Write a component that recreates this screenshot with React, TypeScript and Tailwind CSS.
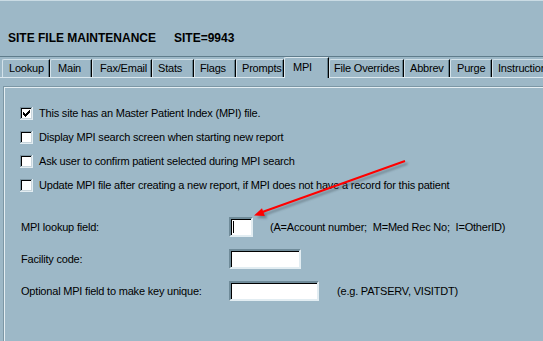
import React from 'react'

const tabs = [
  { label: 'Lookup', cls: 'w-[48px] pl-[6px]' },
  { label: 'Main', cls: 'w-[42px] pl-[7px]' },
  { label: 'Fax/Email', cls: 'w-[60px] pl-[7px]' },
  { label: 'Stats', cls: 'w-[42px] pl-[5px]' },
  { label: 'Flags', cls: 'w-[42px] pl-[5px]' },
  { label: 'Prompts', cls: 'w-[48px] pl-[5px]' },
  { label: 'MPI', cls: 'w-[45px] pl-[8px]', active: true },
  { label: 'File Overrides', cls: 'w-[75px] pl-[4px]' },
  { label: 'Abbrev', cls: 'w-[46px] pl-[5px]' },
  { label: 'Purge', cls: 'w-[42px] pl-[6px]' },
  { label: 'Instructions', cls: 'w-[70px] pl-[5px]' },
]

const options = [
  { text: 'This site has an Master Patient Index (MPI) file.', checked: true },
  { text: 'Display MPI search screen when starting new report' },
  { text: 'Ask user to confirm patient selected during MPI search' },
  { text: 'Update MPI file after creating a new report, if MPI does not have a record for this patient' },
]

// classic 7x7 check glyph
const checkPx = [
  '......X',
  '.....XX',
  'X...XXX',
  'XX.XXX.',
  'XXXXX..',
  '.XXX...',
  '..X....',
]

function CheckBox({ checked = false }: { checked?: boolean }) {
  return (
    <svg width="13" height="13" viewBox="0 0 13 13" shapeRendering="crispEdges" className="shrink-0">
      <rect x="0" y="0" width="13" height="13" fill="#e3edf2" />
      <rect x="0" y="0" width="12" height="1" fill="#7b94a2" />
      <rect x="0" y="0" width="1" height="12" fill="#7b94a2" />
      <rect x="1" y="1" width="11" height="11" fill="#c8d5dc" />
      <rect x="1" y="1" width="10" height="1" fill="#000" />
      <rect x="1" y="1" width="1" height="10" fill="#000" />
      <rect x="2" y="2" width="9" height="9" fill="#fff" />
      {checked &&
        checkPx.map((row, y) =>
          row.split('').map((c, x) =>
            c === 'X' ? <rect key={`${x}-${y}`} x={3 + x} y={3 + y} width="1" height="1" fill="#000" /> : null
          )
        )}
    </svg>
  )
}

function Field({ w, children }: { w: string; children?: React.ReactNode }) {
  return (
    <div
      className={`h-[20px] ${w} bg-white border-2 border-t-[#6f8b99] border-l-[#6f8b99] border-b-[#e2edf2] border-r-[#e2edf2] shadow-[inset_1px_1px_0_#000] flex items-center pl-[2px]`}
    >
      {children}
    </div>
  )
}

export default function App() {
  return (
    <div
      className="relative w-[543px] h-[341px] overflow-hidden bg-[#9db8c7] text-black text-[11px] tracking-[-0.2px]"
      style={{ fontFamily: '"Liberation Sans", Arial, sans-serif' }}
    >
      {/* title */}
      <div className="h-[56px] border-t border-[#cadbe4] pt-[30px] pl-[8px] flex font-bold text-[12px] tracking-normal leading-[14px]">
        <span>SITE FILE MAINTENANCE</span>
        <span className="ml-[18px]">SITE=9943</span>
      </div>
      <div className="h-px bg-[#5f7c8b]" />

      {/* tabs */}
      <div className="h-[21px] flex items-end pl-[2px] border-b border-[#dbe8ef] whitespace-nowrap">
        {tabs.map((t) =>
          t.active ? (
            <div
              key={t.label}
              className={`${t.cls} relative -mb-px h-[21px] bg-[#9db8c7] border-t border-l border-[#dbe8ef] border-r border-r-black shadow-[inset_-1px_0_0_#637f8d] rounded-tl-[2px] pt-[3px] leading-[13px] shrink-0`}
            >
              {t.label}
            </div>
          ) : (
            <div
              key={t.label}
              className={`${t.cls} h-[18px] border-t border-l border-[#d3e2ea] border-r border-r-black shadow-[inset_-1px_0_0_#637f8d] rounded-tl-[2px] pt-[2px] leading-[13px] shrink-0 overflow-hidden`}
            >
              {t.label}
            </div>
          )
        )}
      </div>

      {/* page */}
      <div className="pt-[8px] pl-[3px]">
        <div className="h-[260px] border-t border-l border-[#7c97a5] shadow-[inset_1px_1px_0_#e4eef3] pt-[14px]">
          <div className="flex flex-col pl-[16px]">
            {options.map((o) => (
              <div key={o.text} className="h-[24px] flex items-center gap-[6px]">
                <CheckBox checked={o.checked} />
                <span className="leading-[13px]">{o.text}</span>
              </div>
            ))}
          </div>

          <div className="mt-[20px] flex flex-col gap-[12px] pl-[17px]">
            <div className="flex items-center">
              <span className="w-[208px]">MPI lookup field:</span>
              <Field w="w-[24px]">
                <span className="w-px h-[12px] bg-black" />
              </Field>
              <span className="ml-[17px]">(A=Account number;&nbsp; M=Med Rec No;&nbsp; I=OtherID)</span>
            </div>
            <div className="flex items-center">
              <span className="w-[208px]">Facility code:</span>
              <Field w="w-[72px]" />
            </div>
            <div className="flex items-center">
              <span className="w-[208px]">Optional MPI field to make key unique:</span>
              <Field w="w-[90px]" />
              <span className="ml-[18px]">(e.g. PATSERV, VISITDT)</span>
            </div>
          </div>
        </div>
      </div>

      {/* annotation arrow */}
      <svg className="absolute left-0 top-0 pointer-events-none" width="543" height="341" viewBox="0 0 543 341">
        <defs>
          <filter id="blur" x="-10%" y="-10%" width="120%" height="120%">
            <feGaussianBlur stdDeviation="1.2" />
          </filter>
        </defs>
        <g filter="url(#blur)" opacity="0.45" transform="translate(2.5 2.5)">
          <line x1="405" y1="161" x2="262" y2="212" stroke="#3d4a52" strokeWidth="2" />
          <polygon points="254,215.5 262,208.3 264.8,215.9" fill="#3d4a52" />
        </g>
        <line x1="405" y1="161" x2="261" y2="212.5" stroke="#ff0000" strokeWidth="2" />
        <polygon points="254,215.5 262,208.3 264.8,215.9" fill="#ff0000" />
      </svg>
    </div>
  )
}
